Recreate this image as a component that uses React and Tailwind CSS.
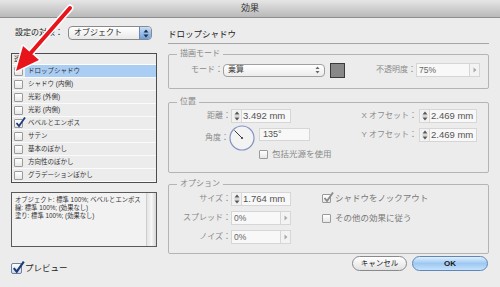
import React from 'react';

const rows = [
  { label: 'ドロップシャドウ', active: true },
  { label: 'シャドウ (内側)' },
  { label: '光彩 (外側)' },
  { label: '光彩 (内側)' },
  { label: 'ベベルとエンボス', checked: true },
  { label: 'サテン' },
  { label: '基本のぼかし' },
  { label: '方向性のぼかし' },
  { label: 'グラデーションぼかし' },
];

function Box({ checked, big, muted }) {
  return (
    <div
      className={
        big
          ? 'relative h-[11px] w-[11px] rounded-[2px] border border-[#6f7f9f] bg-gradient-to-b from-[#ffffff] to-[#cfd9ea]'
          : 'relative h-[9px] w-[9px] rounded-[1px] border border-[#9a9a9a] bg-gradient-to-b from-[#ffffff] to-[#e6e6e6]'
      }
    >
      {checked && (
        <svg
          className="absolute left-[0px] top-[-3px]"
          width={big ? 13 : 11}
          height={big ? 13 : 11}
          viewBox="0 0 11 11"
        >
          <path
            d="M1.5 6 L4 9 L10 0.5"
            fill="none"
            stroke={muted ? '#8a8a8a' : '#1d3c7a'}
            strokeWidth="1.8"
          />
        </svg>
      )}
    </div>
  );
}

function Stepper() {
  return (
    <div className="flex h-full w-[10px] shrink-0 items-center justify-center border-r border-[#d8d8d8] bg-[#f2f2f2]">
      <svg width="6" height="10" viewBox="0 0 6 10">
        <path d="M3 0.5 L5.5 3.5 H0.5 Z" fill="#555" />
        <line x1="0.5" y1="5" x2="5.5" y2="5" stroke="#999" strokeWidth="0.6" />
        <path d="M0.5 6.5 H5.5 L3 9.5 Z" fill="#555" />
      </svg>
    </div>
  );
}

function NumField({ value, w = 'w-[60px]' }) {
  return (
    <div className={`flex h-[14px] ${w} items-center border border-[#d6d6d6] bg-[#f8f8f8]`}>
      <Stepper />
      <span className="pl-[1px] text-[9.5px] leading-none text-[#555]">{value}</span>
    </div>
  );
}

function ArrowField({ value, w = 'w-[50px]' }) {
  return (
    <div className="flex h-[14px] items-stretch">
      <div className={`flex ${w} items-center border border-[#d6d6d6] bg-[#f8f8f8] pl-[2px] text-[8.5px] leading-none text-[#666]`}>
        {value}
      </div>
      <div className="flex w-[10px] items-center justify-center border border-l-0 border-[#d6d6d6] bg-[#f3f3f3]">
        <svg width="4" height="6" viewBox="0 0 4 6">
          <path d="M0.5 0.5 L3.5 3 L0.5 5.5 Z" fill="#aaa" />
        </svg>
      </div>
    </div>
  );
}

function Label({ children, w = 'w-[62px]' }) {
  return <div className={`${w} shrink-0 text-right text-[8px] leading-none text-[#8a8a8a]`}>{children}</div>;
}

function Dial() {
  return (
    <svg width="26" height="26" viewBox="0 0 26 26">
      <circle cx="13" cy="13" r="12" fill="#f3f3f3" stroke="#8494c4" strokeWidth="1.2" />
      <line x1="5.5" y1="5.5" x2="13" y2="13" stroke="#3a3a3a" strokeWidth="1" />
      <circle cx="13" cy="13" r="1.1" fill="#3a3a3a" />
    </svg>
  );
}

function Group({ title, className, children }) {
  return (
    <fieldset className={`rounded-[2px] border border-[#b4b4b4] ${className}`}>
      <legend className="ml-[8px] px-[3px] text-[8px] leading-[12px] text-[#888]">{title}</legend>
      {children}
    </fieldset>
  );
}

export default function App() {
  return (
    <div className="relative h-[287px] w-[500px] overflow-hidden bg-[#ececec] font-['Liberation_Sans','Noto_Sans_CJK_JP',sans-serif] text-[#222]">
      <div className="flex h-[18px] items-center justify-center border-b border-[#8e8e8e] bg-gradient-to-b from-[#e6e6e6] to-[#b9b9b9] text-[9px] text-[#333]">
        効果
      </div>

      <div className="flex">
        {/* left column */}
        <div className="ml-[11px] flex w-[146px] flex-col">
          <div className="mt-[8px] flex h-[14px] items-center">
            <span className="ml-[4px] w-[53px] text-[8px] leading-none text-[#222]">設定の対象：</span>
            <div className="flex h-[14px] w-[84px] items-stretch overflow-hidden rounded-[4px] border border-[#8a8a8a] bg-gradient-to-b from-[#ffffff] to-[#e9e9e9]">
              <span className="flex flex-1 items-center pl-[5px] text-[8px] leading-none">オブジェクト</span>
              <div className="flex w-[12px] items-center justify-center border-l border-[#6d88b5] bg-gradient-to-b from-[#c9def6] to-[#6e9fdc]">
                <svg width="6" height="9" viewBox="0 0 6 9">
                  <path d="M3 0.5 L5.5 3.5 H0.5 Z" fill="#1f2f48" />
                  <path d="M0.5 5.5 H5.5 L3 8.5 Z" fill="#1f2f48" />
                </svg>
              </div>
            </div>
          </div>

          <div className="mt-[13px] h-[130px] border-[1.5px] border-[#4d4d4d] bg-[#ececec]">
            <div className="flex h-[11px] items-center border-b border-[#ffffff] pl-[2px] text-[6.5px] leading-none text-[#333]">
              透明
            </div>
            {rows.map((r) => (
              <div key={r.label} className="flex h-[13px] items-stretch border-b border-[#fafafa]">
                <div className="flex w-[13px] items-center justify-center">
                  <Box checked={r.checked} />
                </div>
                <div
                  className={`flex flex-1 items-center pl-[3px] text-[6.5px] leading-none text-[#333] ${
                    r.active ? 'bg-[#a9cdf3]' : ''
                  }`}
                >
                  {r.label}
                </div>
              </div>
            ))}
          </div>

          <div className="mt-[9px] flex h-[55px] border border-[#5a5a5a] bg-[#f2f2f2]">
            <div className="flex-1 pl-[3px] pt-[3px] text-[6.3px] leading-[8px] text-[#333]">
              <div>オブジェクト: 標準 100%; ベベルとエンボス</div>
              <div>線: 標準 100%; (効果なし)</div>
              <div>塗り: 標準 100%; (効果なし)</div>
            </div>
            <div className="w-[10px] border-l border-[#cfcfcf] bg-gradient-to-r from-[#e4e4e4] via-[#f7f7f7] to-[#d6d6d6]" />
          </div>

          <div className="mt-[15px] flex h-[12px] items-center gap-[3px]">
            <Box checked big />
            <span className="text-[8.5px] leading-none text-[#222]">プレビュー</span>
          </div>
        </div>

        {/* right column */}
        <div className="ml-[11px] flex w-[321px] flex-col">
          <div className="mt-[10px] h-[16px] border-b border-[#a6a6a6] text-[8.5px] leading-[12px] text-[#222]">
            ドロップシャドウ
          </div>

          <Group title="描画モード" className="mt-[4px] pb-[10px]">
            <div className="mt-[2px] flex h-[16px] items-center">
              <Label w="w-[54px]">モード：</Label>
              <div className="flex h-[13px] w-[102px] items-center rounded-[4px] border border-[#a0a0a0] bg-gradient-to-b from-[#ffffff] to-[#ececec]">
                <span className="flex-1 pl-[4px] text-[8px] leading-none text-[#444]">乗算</span>
                <svg className="mr-[4px]" width="5" height="8" viewBox="0 0 5 8">
                  <path d="M2.5 0.5 L4.5 3 H0.5 Z" fill="#666" />
                  <path d="M0.5 5 H4.5 L2.5 7.5 Z" fill="#666" />
                </svg>
              </div>
              <div className="ml-[5px] h-[15px] w-[15px] border border-[#3a3a3a] bg-[#888888]" />
              <Label w="w-[71px]">不透明度：</Label>
              <ArrowField value="75%" w="w-[54px]" />
            </div>
          </Group>

          <Group title="位置" className="mt-[7px] pb-[13px]">
            <div className="flex pt-[1px]">
              <div className="flex flex-col">
                <div className="flex h-[13px] items-center">
                  <Label>距離：</Label>
                  <NumField value="3.492 mm" />
                </div>
                <div className="mt-[3px] flex">
                  <div className="flex h-[26px] items-center">
                    <Label w="w-[60px]">角度：</Label>
                  </div>
                  <Dial />
                  <div className="ml-[4px] flex flex-col pt-[3px]">
                    <div className="flex h-[13px] w-[51px] items-center border border-[#d6d6d6] bg-[#f8f8f8] pl-[3px] text-[9px] leading-none text-[#555]">
                      135°
                    </div>
                    <div className="mt-[8px] flex h-[10px] items-center gap-[4px]">
                      <Box />
                      <span className="text-[8.5px] leading-none text-[#888]">包括光源を使用</span>
                    </div>
                  </div>
                </div>
              </div>
              <div className="flex flex-1 flex-col items-end pr-[11px]">
                <div className="flex h-[13px] items-center gap-[2px]">
                  <Label w="w-auto">X オフセット：</Label>
                  <NumField value="2.469 mm" w="w-[58px]" />
                </div>
                <div className="mt-[6px] flex h-[13px] items-center gap-[2px]">
                  <Label w="w-auto">Y オフセット：</Label>
                  <NumField value="2.469 mm" w="w-[58px]" />
                </div>
              </div>
            </div>
          </Group>

          <Group title="オプション" className="mt-[5px] pb-[9px]">
            <div className="flex pt-[2px]">
              <div className="flex flex-col gap-[5px]">
                <div className="flex h-[14px] items-center">
                  <Label>サイズ：</Label>
                  <NumField value="1.764 mm" />
                </div>
                <div className="flex h-[14px] items-center">
                  <Label>スプレッド：</Label>
                  <ArrowField value="0%" />
                </div>
                <div className="flex h-[14px] items-center">
                  <Label>ノイズ：</Label>
                  <ArrowField value="0%" />
                </div>
              </div>
              <div className="ml-[31px] flex flex-col gap-[10px] pt-[1px]">
                <div className="flex h-[10px] items-center gap-[4px]">
                  <Box checked muted />
                  <span className="text-[8.5px] leading-none text-[#777]">シャドウをノックアウト</span>
                </div>
                <div className="flex h-[10px] items-center gap-[4px]">
                  <Box />
                  <span className="text-[8.5px] leading-none text-[#777]">その他の効果に従う</span>
                </div>
              </div>
            </div>
          </Group>

          <div className="mt-[2px] flex justify-end gap-[5px] pr-[1px]">
            <button className="flex h-[15px] w-[55px] items-center justify-center rounded-full border border-[#8a8a8a] bg-gradient-to-b from-[#ffffff] to-[#e2e2e2] text-[7.5px] leading-none text-[#222]">
              キャンセル
            </button>
            <button className="flex h-[15px] w-[76px] items-center justify-center rounded-full border border-[#5f86b8] bg-gradient-to-b from-[#e2effc] via-[#9cc8f2] to-[#c6e2fb] text-[8px] font-bold leading-none text-[#1a1a1a]">
              OK
            </button>
          </div>
        </div>
      </div>

      {/* annotation arrow */}
      <svg className="pointer-events-none absolute left-0 top-0" width="500" height="287" viewBox="0 0 500 287">
        <line x1="70" y1="8" x2="29" y2="55" stroke="#ffffff" strokeWidth="7" strokeLinecap="round" />
        <polygon points="16,71 23,46 39,60" fill="#ffffff" stroke="#ffffff" strokeWidth="3" strokeLinejoin="round" />
        <line x1="70" y1="8" x2="29" y2="55" stroke="#e8141c" strokeWidth="4" strokeLinecap="round" />
        <polygon points="16,71 23,46 39,60" fill="#e8141c" />
      </svg>
    </div>
  );
}
